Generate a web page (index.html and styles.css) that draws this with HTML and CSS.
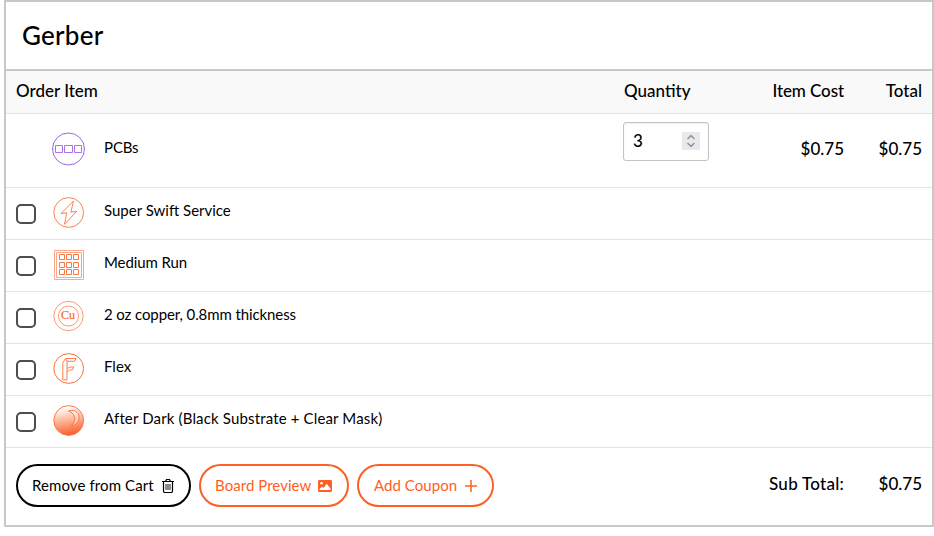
FILE: index.html
```html
<!DOCTYPE html>
<html lang="en">
<head>
<meta charset="utf-8">
<title>Cart</title>
<link rel="stylesheet" href="styles.css">
</head>
<body>
<main class="card">
  <h1 class="title">Gerber</h1>
  <div class="row head">
    <span class="name">Order Item</span><span class="qty">Quantity</span><span class="cost tight">Item Cost</span><span class="total">Total</span>
  </div>
  <div class="row main">
    <span class="check"></span>
    <svg class="icon" viewBox="0 0 34 34" fill="none" stroke="#a163e8"><circle cx="16.500" cy="17" r="16"/><path d="M3.500 13.500h7v7h-7zM12.500 13.500h8v7h-8zM22.500 13.500h7v7h-7z" stroke-width=".9"/><path d="M1 17h3M10.500 17h3M20.500 17h2.500M29.500 17h3" stroke-width=".3"/></svg>
    <span class="label tight">PCBs</span>
    <span class="qty"><span class="number">3<span class="spin"><svg viewBox="0 0 18 18" fill="none" stroke="#94949d" stroke-width="1.600"><path d="M5.500 7 9 3.700 12.500 7M5.500 11 9 14.300 12.500 11"/></svg></span></span></span>
    <span class="cost price">$0.75</span><span class="total price">$0.75</span>
  </div>
  <div class="row">
    <span class="check"><span class="box"></span></span>
    <svg class="icon" viewBox="0 0 34 34" fill="none" stroke="#fa8254"><circle cx="16.700" cy="17.500" r="14.900"/><path d="m21.500 6-12.500 12.500 5.700-.7-2.200 11.500 12.200-13-5.800.8z"/></svg>
    <span class="label">Super Swift Service</span>
  </div>
  <div class="row">
    <span class="check"><span class="box"></span></span>
    <svg class="icon" viewBox="0 0 34 34" fill="none" stroke="#fa7847"><path d="M2.500 3.500h29v29h-29zM4.500 5.500h25v25h-25z" stroke="#fca787"/><path d="M7.500 7.500h5v5h-5zM14.500 7.500h5v5h-5zM21.500 7.500h5v5h-5zM7.500 15.500h5v5h-5zM14.500 15.500h5v5h-5zM21.500 15.500h5v5h-5zM7.500 22.500h5v5h-5zM14.500 22.500h5v5h-5zM21.500 22.500h5v5h-5z"/></svg>
    <span class="label tight">Medium Run</span>
  </div>
  <div class="row">
    <span class="check"><span class="box"></span></span>
    <svg class="icon" viewBox="0 0 34 34" fill="none" stroke="#fb9a76"><circle cx="16.500" cy="17" r="14.700"/><circle cx="16.500" cy="17" r="10"/><text class="cu" x="16" y="20" text-anchor="middle">Cu</text></svg>
    <span class="label tight">2 oz copper, 0.8mm thickness</span>
  </div>
  <div class="row">
    <span class="check"><span class="box"></span></span>
    <svg class="icon" viewBox="0 0 34 34" fill="none" stroke="#fa6f3b"><circle cx="16.700" cy="17.500" r="14.900"/><path stroke-width=".9" d="M10.800 28.800V11.800L13.500 7.500h10.500l-1.500 2.800H15M10.800 28.800H15V17.500l3.300-1.500h3.500L20.500 19h-3.200L15 21.300M13.500 7.500 15 10.300v7"/></svg>
    <span class="label">Flex</span>
  </div>
  <div class="row">
    <span class="check"><span class="box"></span></span>
    <svg class="icon" viewBox="0 0 34 34" fill="none" stroke="#fa7847"><defs><linearGradient id="moon" x1=".4" y1="0" x2=".6" y2="1"><stop offset=".05" stop-color="#fff"/><stop offset="1" stop-color="#f95a20"/></linearGradient></defs><circle cx="16.700" cy="17.500" r="14.900" fill="url(#moon)"/><path d="M16.500 8C29 4 31.500 21 18.500 23.300 25.500 19 23.500 10 16.500 8z" fill="#fff" fill-opacity=".45"/></svg>
    <span class="label wide">After Dark (Black Substrate + Clear Mask)</span>
  </div>
  <footer class="row foot">
    <div class="actions">
      <button class="btn remove">Remove from Cart<svg width="12" height="14" viewBox="0 0 12 14" fill="none" stroke="currentColor"><path d="M0 2.500h12M3.500 2.500l1-2h3l1 2M1.500 2.500v9.500q0 1.500 1.500 1.500h6q1.500 0 1.500-1.500v-9.500" stroke-width="1.200"/><path d="M4 5v6M6 5v6M8 5v6" stroke-width=".9"/></svg></button>
      <button class="btn preview">Board Preview<svg width="14" height="12" viewBox="0 0 14 12"><rect width="14" height="12" rx="1.300" fill="currentColor"/><circle cx="3.500" cy="3.200" r="1.300" fill="#fff"/><path d="M1.500 10V9L4 6.500 5.500 8l3.200-4.300L12.500 8.500V10z" fill="#fff"/></svg></button>
      <button class="btn coupon">Add Coupon<svg width="12" height="12" viewBox="0 0 12 12" stroke="currentColor" stroke-width="1.500"><path d="M0 6h12M6 0v12"/></svg></button>
    </div>
    <span class="cost wide">Sub Total:</span><span class="total price">$0.75</span>
  </footer>
</main>
</body>
</html>
```
FILE: styles.css
```css
* { box-sizing: border-box; }
body { margin: 0; background: #fff; color: #000; font-family: Lato, "Noto Sans", sans-serif; }
.card { width: 930px; height: 527px; margin-left: 4px; border: 2px solid #c8c8c8; }
.title { height: 69px; margin: 0; padding: 0 16px 2px; display: flex; align-items: center; border-bottom: 2px solid #c8c8c8; font-size: 26px; font-weight: 500; letter-spacing: .25px; }
.row { height: 52px; display: flex; align-items: center; padding: 0 10px; border-bottom: 1px solid #e3e3e3; }
.head { height: 43px; padding-bottom: 4px; background: #f9f9f9; font-size: 17px; font-weight: 500; }
.name, .actions { flex: 1; }
.main { height: 74px; }
.main .qty { align-self: flex-start; margin-top: 8px; margin-left: auto; }
.row.main .label { padding-bottom: 7px; }
.main .icon { margin-top: -3px; margin-bottom: 0; }
.qty { width: 120px; padding-left: 1px; }
.main .qty { padding: 0; }
.cost { width: 101px; text-align: right; }
.total { width: 78px; text-align: right; }
.check { width: 20px; margin-right: 16px; }
.box { display: block; width: 20px; height: 20px; margin-top: 1px; border: 2px solid #4d4d4d; border-radius: 5px; }
.icon { width: 34px; height: 34px; flex: none; margin-right: 18px; margin-bottom: 3px; }
.label { font-size: 15px; padding-bottom: 7px; }
.tight { letter-spacing: -.1px; }
.wide { letter-spacing: .15px; }
.foot .wide { letter-spacing: .25px; }
.cu { font: 12px "Liberation Serif", serif; fill: #f95e26; stroke: #f95e26; stroke-width: .15px; }
.number { display: flex; align-items: center; justify-content: space-between; width: 86px; height: 39px; padding: 0 8px 1px 9px; border: 1px solid #c4c4c4; border-radius: 3px; font-size: 17px; line-height: 18px; font-weight: 500; box-shadow: inset 0 1px 2px #0001; }
.spin { width: 18px; height: 18px; background: #e9e9ed; }
.spin svg { display: block; }
.price { font-size: 17px; font-weight: 500; }
.main .price { margin-top: -4px; }
.foot { height: 77px; border: 0; padding-bottom: 2px; font-size: 17px; font-weight: 500; }
.foot .cost, .foot .total { margin-top: -4px; }
.actions { display: flex; gap: 8px; }
.btn { display: flex; align-items: center; justify-content: space-between; height: 43px; padding: 0 15px 2px 14px; border: 2px solid #fe6023; border-radius: 22px; background: #fff; color: #fe6023; font: 15px Lato, sans-serif; letter-spacing: .05px; white-space: nowrap; }
.btn svg { position: relative; top: 1px; }
.remove { width: 175px; border-color: #000; color: #000; letter-spacing: .1px; }
.preview { width: 150px; }
.coupon { width: 137px; padding-left: 15px; }
```
